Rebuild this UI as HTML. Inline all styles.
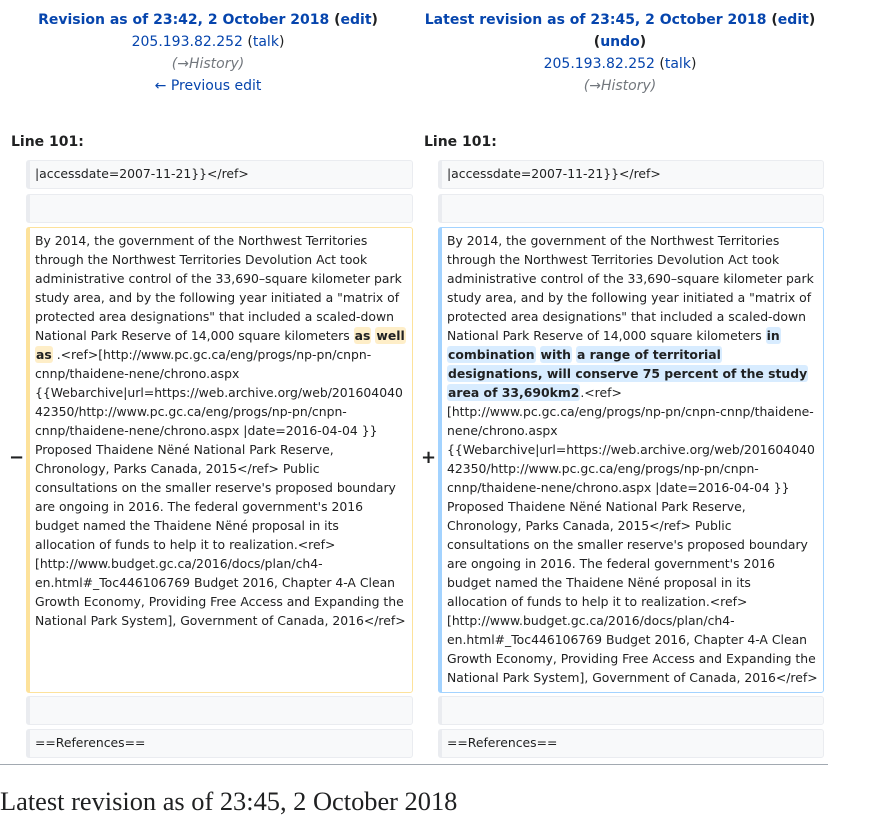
<!DOCTYPE html>
<html><head><meta charset="utf-8"><style>
body{margin:0;width:874px;height:800px;overflow:hidden;background:#fff;font-family:"DejaVu Sans","Liberation Sans",sans-serif;color:#202122;position:relative}
a{color:#0645ad;text-decoration:none}
.hd{position:absolute;top:9px;text-align:center;font-size:14px;line-height:22px}
.hd b{font-weight:bold}
.gr{color:#72777d;font-style:italic}
.ln{position:absolute;top:134px;font-weight:bold;font-size:14px}
.box{position:absolute;box-sizing:border-box;background:#f8f9fa;border:1px solid #eaecf0;border-left:4px solid #eaecf0;border-radius:3px;font-size:12.4px;line-height:19px;padding:3px 0 0 5px;white-space:nowrap}
.big{background:#fff;padding-top:3px}
.del{border-color:#fde29b}
.add{border-color:#a3d3ff}
.hl{font-weight:bold;border-radius:3px;padding:1px 1px}
.del .hl{background:#feeec8}
.add .hl{background:#d8ecff}
.mk{position:absolute;font-size:18px;font-weight:bold}
</style></head><body>
<div class="hd" style="left:0;width:416px"><b><a>Revision as of 23:42, 2 October 2018</a> (<a>edit</a>)</b><br><a>205.193.82.252</a> (<a>talk</a>)<br><span class="gr">(→History)</span><br><a>← Previous edit</a></div>
<div class="hd" style="left:412px;width:416px"><b><a>Latest revision as of 23:45, 2 October 2018</a> (<a>edit</a>)<br>(<a>undo</a>)</b><br><a>205.193.82.252</a> (<a>talk</a>)<br><span class="gr">(→History)</span></div>
<div class="ln" style="left:11px">Line 101:</div>
<div class="ln" style="left:424px">Line 101:</div>

<div class="box" style="left:26px;top:160px;width:387px;height:29px">|accessdate=2007-11-21}}&lt;/ref&gt;</div>
<div class="box" style="left:438px;top:160px;width:386px;height:29px">|accessdate=2007-11-21}}&lt;/ref&gt;</div>
<div class="box" style="left:26px;top:194px;width:387px;height:29px"></div>
<div class="box" style="left:438px;top:194px;width:386px;height:29px"></div>

<div class="mk" style="left:9px;top:447px">−</div>
<div class="box big del" style="left:26px;top:227px;width:387px;height:466px">By 2014, the government of the Northwest Territories<br>through the Northwest Territories Devolution Act took<br>administrative control of the 33,690–square kilometer park<br>study area, and by the following year initiated a "matrix of<br>protected area designations" that included a scaled-down<br>National Park Reserve of 14,000 square kilometers <span class="hl">as</span> <span class="hl">well</span><br><span class="hl">as</span> .&lt;ref&gt;[http://www.pc.gc.ca/eng/progs/np-pn/cnpn-<br>cnnp/thaidene-nene/chrono.aspx<br>{{Webarchive|url=https://web.archive.org/web/201604040<br>42350/http://www.pc.gc.ca/eng/progs/np-pn/cnpn-<br>cnnp/thaidene-nene/chrono.aspx |date=2016-04-04 }}<br>Proposed Thaidene Nëné National Park Reserve,<br>Chronology, Parks Canada, 2015&lt;/ref&gt; Public<br>consultations on the smaller reserve's proposed boundary<br>are ongoing in 2016. The federal government's 2016<br>budget named the Thaidene Nëné proposal in its<br>allocation of funds to help it to realization.&lt;ref&gt;<br>[http://www.budget.gc.ca/2016/docs/plan/ch4-<br>en.html#_Toc446106769 Budget 2016, Chapter 4-A Clean<br>Growth Economy, Providing Free Access and Expanding the<br>National Park System], Government of Canada, 2016&lt;/ref&gt;</div>

<div class="mk" style="left:421px;top:447px">+</div>
<div class="box big add" style="left:438px;top:227px;width:386px;height:466px">By 2014, the government of the Northwest Territories<br>through the Northwest Territories Devolution Act took<br>administrative control of the 33,690–square kilometer park<br>study area, and by the following year initiated a "matrix of<br>protected area designations" that included a scaled-down<br>National Park Reserve of 14,000 square kilometers <span class="hl">in</span><br><span class="hl">combination</span> <span class="hl">with</span> <span class="hl">a range of territorial</span><br><span class="hl">designations, will conserve 75 percent of the study</span><br><span class="hl">area of 33,690km2</span>.&lt;ref&gt;<br>[http://www.pc.gc.ca/eng/progs/np-pn/cnpn-cnnp/thaidene-<br>nene/chrono.aspx<br>{{Webarchive|url=https://web.archive.org/web/201604040<br>42350/http://www.pc.gc.ca/eng/progs/np-pn/cnpn-<br>cnnp/thaidene-nene/chrono.aspx |date=2016-04-04 }}<br>Proposed Thaidene Nëné National Park Reserve,<br>Chronology, Parks Canada, 2015&lt;/ref&gt; Public<br>consultations on the smaller reserve's proposed boundary<br>are ongoing in 2016. The federal government's 2016<br>budget named the Thaidene Nëné proposal in its<br>allocation of funds to help it to realization.&lt;ref&gt;<br>[http://www.budget.gc.ca/2016/docs/plan/ch4-<br>en.html#_Toc446106769 Budget 2016, Chapter 4-A Clean<br>Growth Economy, Providing Free Access and Expanding the<br>National Park System], Government of Canada, 2016&lt;/ref&gt;</div>

<div class="box" style="left:26px;top:696px;width:387px;height:29px"></div>
<div class="box" style="left:438px;top:696px;width:386px;height:29px"></div>
<div class="box" style="left:26px;top:729px;width:387px;height:29px">==References==</div>
<div class="box" style="left:438px;top:729px;width:386px;height:29px">==References==</div>

<div style="position:absolute;left:0;top:764px;width:828px;height:1px;background:#a2a9b1"></div>
<div style="position:absolute;left:0;top:786px;font-family:'Liberation Serif',serif;font-size:26.4px;line-height:30px;white-space:nowrap">Latest revision as of 23:45, 2 October 2018</div>
</body></html>
